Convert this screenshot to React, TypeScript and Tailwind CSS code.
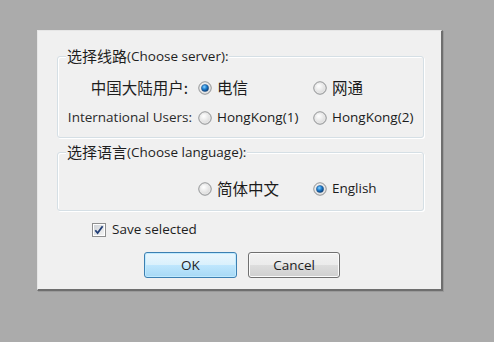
import React from "react";

const latin = { fontFamily: '"Open Sans", "Noto Sans", sans-serif' };
const cjk = { fontFamily: '"Noto Sans CJK SC", sans-serif' };

function Radio({ checked }: { checked?: boolean }) {
  return (
    <svg width="14" height="14" viewBox="0 0 14 14" className="shrink-0">
      <defs>
        <radialGradient id="rbg" cx="0.4" cy="0.35" r="0.7">
          <stop offset="0" stopColor="#ffffff" />
          <stop offset="1" stopColor="#d4d4d4" />
        </radialGradient>
        <radialGradient id="rdot" cx="0.4" cy="0.35" r="0.65">
          <stop offset="0" stopColor="#8ad3ff" />
          <stop offset="0.5" stopColor="#1f7fd0" />
          <stop offset="1" stopColor="#0a3f78" />
        </radialGradient>
      </defs>
      <circle cx="7" cy="7" r="6.2" fill="url(#rbg)" stroke="#8a8c8e" strokeWidth="1" />
      <circle cx="7" cy="7" r="5" fill="none" stroke="#e8e8e8" strokeWidth="0.8" />
      {checked && <circle cx="7" cy="7" r="3.6" fill="url(#rdot)" stroke="#1c4f85" strokeWidth="0.5" />}
    </svg>
  );
}

function Opt({ checked, children, w }: { checked?: boolean; children: React.ReactNode; w?: string }) {
  return (
    <div className={`flex items-center gap-[5px] ${w ?? ""}`}>
      <Radio checked={checked} />
      <span className="text-[#1b1b1b] leading-none">{children}</span>
    </div>
  );
}

function Group({ title, children, className }: { title: React.ReactNode; children: React.ReactNode; className?: string }) {
  return (
    <div
      className={`relative ml-[19px] w-[367px] rounded-[3px] border border-[#d5dfe5] shadow-[inset_1px_1px_0_#ffffff,1px_1px_0_#ffffff] ${className ?? ""}`}
    >
      <div className="absolute left-[8px] top-[-10px] bg-[#f0f0f0] px-[1px] flex items-center h-[19px] text-[#1e1e1e]">
        {title}
      </div>
      {children}
    </div>
  );
}

export default function App() {
  return (
    <div className="w-[494px] h-[342px] bg-[#ababab] pt-[30px] pl-[37px] overflow-hidden" style={latin}>
      <div className="w-[406px] h-[261px] bg-[#f0f0f0] border-l border-t border-[#e6e6e6] border-r-[2px] border-b-[2px] border-r-[#6e6e6e] border-b-[#6e6e6e] shadow-[1px_1px_0_#9a9a9a] text-[13.5px]">
        <Group
          className="mt-[25px] h-[82px] pt-[21px]"
          title={
            <>
              <span className="text-[15px]" style={cjk}>选择线路</span>
              <span className="text-[13.5px]">(Choose server):</span>
            </>
          }
        >
          <div className="flex items-center h-[20px]">
            <div className="w-[134px] text-right pr-[4px] text-[15.5px] leading-none text-[#1e1e1e]" style={cjk}>
              中国大陆用户:
            </div>
            <div className="ml-[6px] flex">
              <Opt checked w="w-[115px]">
                <span className="text-[15.5px]" style={cjk}>电信</span>
              </Opt>
              <Opt>
                <span className="text-[15.5px]" style={cjk}>网通</span>
              </Opt>
            </div>
          </div>
          <div className="flex items-center h-[20px] mt-[10px]">
            <div className="w-[134px] text-right text-[13.5px] leading-none text-[#2a2a2a]">International Users:</div>
            <div className="ml-[6px] flex">
              <Opt w="w-[115px]">HongKong(1)</Opt>
              <Opt>HongKong(2)</Opt>
            </div>
          </div>
        </Group>

        <Group
          className="mt-[14px] h-[59px] pt-[26px]"
          title={
            <>
              <span className="text-[15px]" style={cjk}>选择语言</span>
              <span className="text-[13.5px]">(Choose language):</span>
            </>
          }
        >
          <div className="flex items-center h-[20px]">
            <div className="w-[134px]" />
            <div className="ml-[6px] flex">
              <Opt w="w-[115px]">
                <span className="text-[15.5px]" style={cjk}>简体中文</span>
              </Opt>
              <Opt checked>English</Opt>
            </div>
          </div>
        </Group>

        <div className="flex items-center h-[16px] mt-[11px] ml-[54px] gap-[6px]">
          <svg width="14" height="14" viewBox="0 0 14 14" className="shrink-0">
            <defs>
              <linearGradient id="cbg" x1="0" y1="0" x2="1" y2="1">
                <stop offset="0" stopColor="#cfd3d8" />
                <stop offset="1" stopColor="#f4f4f4" />
              </linearGradient>
            </defs>
            <rect x="0.5" y="0.5" width="13" height="13" fill="#ffffff" stroke="#8e8f8f" />
            <rect x="2" y="2" width="10" height="10" fill="url(#cbg)" />
            <path d="M3.3 7.2 L5.6 10 L10.6 3.2" fill="none" stroke="#213e76" strokeWidth="1.8" />
          </svg>
          <span className="text-[13.5px] text-[#1e1e1e] leading-none">Save selected</span>
        </div>

        <div className="flex mt-[14px] ml-[106px] gap-[11px]">
          <button className="w-[93px] h-[26px] rounded-[3px] border border-[#3c7fb1] shadow-[inset_0_0_0_1px_#bfeaff] bg-[linear-gradient(to_bottom,#eaf6fd_0%,#d9f0fc_50%,#bee6fd_51%,#a7d9f5_100%)] text-[13.5px] text-[#1e1e1e]">
            OK
          </button>
          <button className="w-[92px] h-[26px] rounded-[3px] border border-[#707070] shadow-[inset_0_0_0_1px_#fbfbfb] bg-[linear-gradient(to_bottom,#f2f2f2_0%,#ebebeb_50%,#dddddd_51%,#cfcfcf_100%)] text-[13.5px] text-[#1e1e1e]">
            Cancel
          </button>
        </div>
      </div>
    </div>
  );
}
